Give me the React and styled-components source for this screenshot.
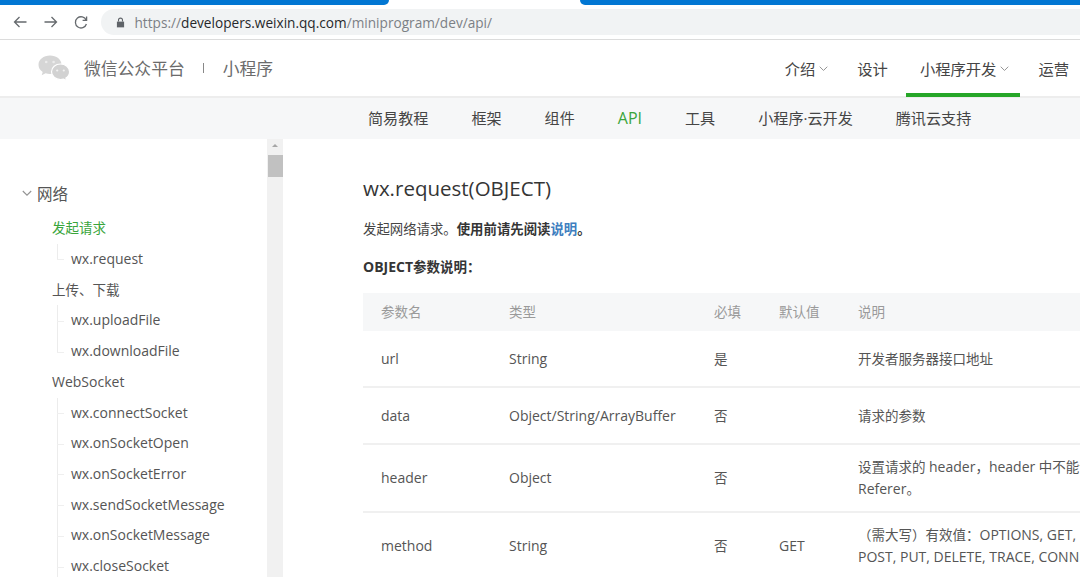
import React from "react";
import styled, { createGlobalStyle } from "styled-components";

const GlobalStyle = createGlobalStyle`
  html, body {
    margin: 0;
    padding: 0;
    background: #fff;
  }
  body {
    font-family: "Open Sans", "Noto Sans CJK SC", sans-serif;
    color: #353535;
  }
`;

const sideItems = [
  { label: "发起请求", level: 1, active: true, cjk: true },
  { label: "wx.request", level: 2, last: true },
  { label: "上传、下载", level: 1, cjk: true },
  { label: "wx.uploadFile", level: 2 },
  { label: "wx.downloadFile", level: 2, last: true },
  { label: "WebSocket", level: 1 },
  { label: "wx.connectSocket", level: 2 },
  { label: "wx.onSocketOpen", level: 2 },
  { label: "wx.onSocketError", level: 2 },
  { label: "wx.sendSocketMessage", level: 2 },
  { label: "wx.onSocketMessage", level: 2 },
  { label: "wx.closeSocket", level: 2 },
];

const subNavItems = ["简易教程", "框架", "组件", "API", "工具", "小程序·云开发", "腾讯云支持"];

const Chevron = ({ size = 9 }) => (
  <svg width={size} height={size} viewBox="0 0 10 10" fill="none" stroke="#939393" strokeWidth="1.1">
    <path d="M0.800 3 L5 7.200 L9.200 3" />
  </svg>
);

const App = () => {
  return (
    <Page>
      <GlobalStyle />
      <TabStrip>
        <TabBlue $width={389} $right />
        <TabGap />
        <TabBlue $left />
      </TabStrip>
      <Toolbar>
        <NavIcon viewBox="0 0 16 16">
          <path d="M14.500 8H2.500M7.500 3 2.500 8l5 5" />
        </NavIcon>
        <NavIcon viewBox="0 0 16 16">
          <path d="M1.500 8h12M8.500 3l5 5-5 5" />
        </NavIcon>
        <NavIcon viewBox="0 0 16 16">
          <path d="M13.200 6.200A5.600 5.600 0 1 0 13.400 10M13.600 2.400v4h-4" />
        </NavIcon>
        <AddressBar>
          <LockIcon viewBox="0 0 10 12">
            <path d="M1 5h8v6.400H1z" />
            <path d="M2.800 5V3.300a2.200 2.200 0 0 1 4.400 0V5" fill="none" stroke="#5f6368" strokeWidth="1.200" />
          </LockIcon>
          <Url>
            https://<b>developers.weixin.qq.com</b>/miniprogram/dev/api/
          </Url>
        </AddressBar>
      </Toolbar>

      <Header>
        <Brand>
          <WechatLogo viewBox="0 0 32 27">
            <path d="M12 0.500C5.600 0.500 0.500 4.500 0.500 9.700c0 3 1.600 5.600 4.200 7.300l-1 3.200 3.900-1.900c1.400.5 2.900.7 4.400.7 6.400 0 11.500-4 11.500-9.300S18.400 0.500 12 0.500z" fill="#d6d6d6" />
            <path d="M22.500 9c-5 0-9 3.500-9 7.800s4 7.800 9 7.800c1.100 0 2.100-.2 3.100-.5l3 1.700-.7-2.700c2.400-1.400 3.700-3.700 3.700-6.300C31.500 12.500 27.500 9 22.500 9z" fill="#d2d2d2" stroke="#fff" strokeWidth="1.200" />
            <circle cx="8.200" cy="7" r="1.300" fill="#ececec" />
            <circle cx="15.600" cy="7" r="1.300" fill="#ececec" />
            <circle cx="19.200" cy="15.500" r="1.100" fill="#f2f2f2" />
            <circle cx="25.800" cy="15.500" r="1.100" fill="#f2f2f2" />
          </WechatLogo>
          <BrandName>微信公众平台</BrandName>
          <BrandBar />
          <BrandName>小程序</BrandName>
        </Brand>
        <MainNav>
          <MainNavItem $chevron>
            介绍<Chevron />
          </MainNavItem>
          <MainNavItem>设计</MainNavItem>
          <MainNavItem $active $chevron>
            小程序开发<Chevron />
          </MainNavItem>
          <MainNavItem>运营</MainNavItem>
        </MainNav>
      </Header>

      <SubNav>
        {subNavItems.map((item) => (
          <SubNavItem key={item} $active={item === "API"}>
            {item}
          </SubNavItem>
        ))}
      </SubNav>

      <Body>
        <Sidebar>
          <SideGroup>
            <Chevron size={10} />
            网络
          </SideGroup>
          {sideItems.map((item) => (
            <SideItem key={item.label} $level={item.level} $active={item.active} $last={item.last} $cjk={item.cjk}>
              {item.label}
            </SideItem>
          ))}
        </Sidebar>
        <Scrollbar>
          <ScrollArrow />
          <ScrollThumb />
        </Scrollbar>
        <Content>
          <Title>wx.request(OBJECT)</Title>
          <Intro>
            发起网络请求。<strong>使用前请先阅读<DocLink>说明</DocLink>。</strong>
          </Intro>
          <ParamsTitle><Latin>OBJECT</Latin>参数说明：</ParamsTitle>
          <Table>
            <thead>
              <tr>
                <HeadCell $w={128}>参数名</HeadCell>
                <HeadCell $w={205}>类型</HeadCell>
                <HeadCell $w={65}>必填</HeadCell>
                <HeadCell $w={79}>默认值</HeadCell>
                <HeadCell $w={240}>说明</HeadCell>
              </tr>
            </thead>
            <tbody>
              <Row $h={56}>
                <Cell><Latin>url</Latin></Cell>
                <Cell><Latin>String</Latin></Cell>
                <Cell>是</Cell>
                <Cell />
                <Cell>开发者服务器接口地址</Cell>
              </Row>
              <Row $h={57}>
                <Cell><Latin>data</Latin></Cell>
                <Cell><Latin>Object/String/ArrayBuffer</Latin></Cell>
                <Cell>否</Cell>
                <Cell />
                <Cell>请求的参数</Cell>
              </Row>
              <Row $h={68}>
                <Cell><Latin>header</Latin></Cell>
                <Cell><Latin>Object</Latin></Cell>
                <Cell>否</Cell>
                <Cell />
                <Cell>
                  设置请求的 <Latin>header</Latin>，<Latin>header</Latin> 中不能设置
                  <br />
                  <Latin>Referer</Latin>。
                </Cell>
              </Row>
              <Row $h={68}>
                <Cell><Latin>method</Latin></Cell>
                <Cell><Latin>String</Latin></Cell>
                <Cell>否</Cell>
                <Cell><Latin>GET</Latin></Cell>
                <Cell>
                  （需大写）有效值：<Latin>OPTIONS, GET, HEAD,</Latin>
                  <br />
                  <Latin>POST, PUT, DELETE, TRACE, CONNECT</Latin>
                </Cell>
              </Row>
            </tbody>
          </Table>
        </Content>
      </Body>
    </Page>
  );
};

export default App;

const Page = styled.div`
  width: 1080px;
  height: 577px;
  overflow: hidden;
  display: flex;
  flex-direction: column;
`;

const TabStrip = styled.div`
  display: flex;
  height: 5px;
  flex: none;
`;

const TabBlue = styled.div`
  height: 5px;
  background: #0277d3;
  flex: ${(p) => (p.$width ? `0 0 ${p.$width}px` : "1")};
  border-bottom-right-radius: ${(p) => (p.$right ? "5px" : "0")};
  border-bottom-left-radius: ${(p) => (p.$left ? "5px" : "0")};
`;

const TabGap = styled.div`
  flex: 0 0 191px;
`;

const Toolbar = styled.div`
  height: 35px;
  flex: none;
  display: flex;
  align-items: center;
  padding-left: 12px;
  gap: 14.500px;
  box-sizing: border-box;
  border-bottom: 1px solid #dcdcdc;
`;

const NavIcon = styled.svg`
  width: 16px;
  height: 16px;
  flex: none;
  fill: none;
  stroke: #666a6e;
  stroke-width: 1.300;
`;

const AddressBar = styled.div`
  height: 26px;
  flex: 1;
  margin-left: -3px;
  background: #f1f3f4;
  border-radius: 13px 0 0 13px;
  display: flex;
  align-items: center;
  padding-left: 15px;
  gap: 10px;
`;

const LockIcon = styled.svg`
  width: 9px;
  height: 11px;
  fill: #5f6368;
`;

const Url = styled.span`
  font-size: 13.650px;
  color: #7c8085;
  b {
    font-weight: 400;
    color: #26282b;
  }
`;

const Header = styled.header`
  height: 58px;
  flex: none;
  display: flex;
  justify-content: space-between;
  box-sizing: border-box;
  border-bottom: 2px solid #ededed;
`;

const Brand = styled.div`
  display: flex;
  align-items: center;
  padding-left: 38px;
`;

const WechatLogo = styled.svg`
  width: 32px;
  height: 27px;
  margin-right: 14px;
`;

const BrandName = styled.span`
  font-size: 16.800px;
  color: #6b6b6b;
`;

const BrandBar = styled.span`
  width: 1px;
  height: 10px;
  background: #888;
  margin: 0 19px 0 18px;
`;

const MainNav = styled.nav`
  display: flex;
  gap: 4px;
  margin-right: -3px;
`;

const MainNavItem = styled.div`
  display: flex;
  align-items: center;
  gap: 4px;
  font-size: 15.300px;
  color: #454545;
  height: 57px;
  box-sizing: border-box;
  padding: 3px ${(p) => (p.$chevron ? "11px" : "14px")} 0 14px;
  border-bottom: 4px solid ${(p) => (p.$active ? "#26a628" : "transparent")};
`;

const SubNav = styled.nav`
  height: 41px;
  flex: none;
  box-sizing: border-box;
  padding: 0 0 3px 368px;
  background: #f6f7f8;
  display: flex;
  align-items: center;
  gap: 43px;
`;

const SubNavItem = styled.span`
  font-size: ${(p) => (p.$active ? "16px" : "15.100px")};
  margin-top: ${(p) => (p.$active ? "1px" : "0")};
  color: ${(p) => (p.$active ? "#3aa53c" : "#454545")};
`;

const Body = styled.div`
  flex: 1;
  min-height: 0;
  display: flex;
`;

const Sidebar = styled.aside`
  width: 267px;
  flex: none;
  padding-top: 41px;
  box-sizing: border-box;
  overflow: hidden;
`;

const SideGroup = styled.div`
  display: flex;
  align-items: center;
  gap: 5px;
  padding-left: 22px;
  height: 26px;
  font-size: 15.500px;
  color: #555;
  margin-bottom: 7.300px;
`;

const SideItem = styled.div`
  position: relative;
  height: 30.720px;
  line-height: 30.720px;
  font-size: ${(p) => (p.$cjk ? "13.500px" : "14px")};
  white-space: nowrap;
  padding-left: ${(p) => (p.$level === 1 ? "52px" : "71px")};
  color: ${(p) => (p.$active ? "#3aa53c" : "#555")};

  ${(p) =>
    p.$level === 2 &&
    `
    &::before {
      content: "";
      position: absolute;
      left: 57px;
      top: 0;
      height: ${p.$last ? "50%" : "100%"};
      border-left: 1px solid #ececec;
    }
    &::after {
      content: "";
      position: absolute;
      left: 57px;
      top: 50%;
      width: 7px;
      border-top: 1px solid #efefef;
    }
  `}
`;

const Scrollbar = styled.div`
  width: 16px;
  flex: none;
  background: #f1f1f1;
  display: flex;
  flex-direction: column;
  align-items: center;
`;

const ScrollArrow = styled.div`
  width: 0;
  height: 0;
  margin: 5px 0 8px;
  border-left: 3px solid transparent;
  border-right: 3px solid transparent;
  border-bottom: 3px solid #a6a6a6;
`;

const ScrollThumb = styled.div`
  width: 15px;
  height: 22px;
  background: #c1c1c1;
`;

const Content = styled.main`
  flex: 1;
  min-width: 0;
  padding: 35px 0 0 80px;
  overflow: hidden;
`;

const Title = styled.h1`
  margin: 0;
  font-size: 20.500px;
  line-height: 28px;
  font-weight: 400;
  color: #353535;
`;

const Intro = styled.p`
  margin: 16px 0 0;
  font-size: 13.400px;
  line-height: 22px;
  color: #454545;
  strong {
    font-weight: 700;
    color: #353535;
  }
`;

const DocLink = styled.span`
  color: #3f7fc0;
`;

const ParamsTitle = styled.p`
  margin: 16px 0 0;
  font-size: 13.500px;
  line-height: 22px;
  font-weight: 700;
  color: #353535;
`;

const Table = styled.table`
  margin-top: 15px;
  border-collapse: collapse;
  table-layout: fixed;
  width: 717px;
  font-size: 13.500px;
  color: #555;
`;

const HeadCell = styled.th`
  width: ${(p) => p.$w}px;
  height: 38px;
  padding: 0 0 2px 18px;
  box-sizing: border-box;
  background: #f6f7f8;
  font-weight: 400;
  text-align: left;
  color: #9a9a9a;
`;

const Row = styled.tr`
  height: ${(p) => p.$h}px;
  border-bottom: 2px solid #f0f0f0;
`;

const Cell = styled.td`
  padding: 0 0 0 18px;
  line-height: 22px;
  vertical-align: middle;
  white-space: nowrap;
  overflow: hidden;
`;

const Latin = styled.span`
  font-size: 14px;
`;
